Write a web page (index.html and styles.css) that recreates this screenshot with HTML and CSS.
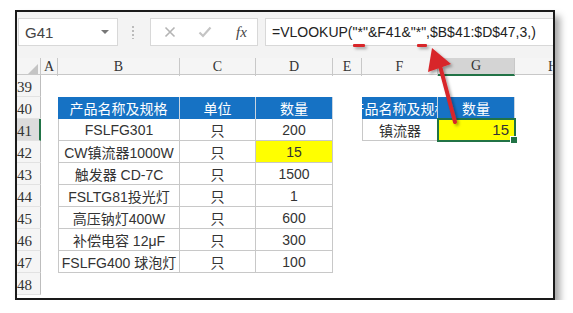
FILE: index.html
```html
<!DOCTYPE html>
<html lang="zh">

<head>
    <meta charset="UTF-8">
    <title>VLOOKUP 通配符查找</title>
    <link rel="stylesheet" href="styles.css">
</head>

<body>
    <div class="window">
        <div class="toolbar">
            <div class="namebox">
                <span>G41</span>
                <span class="caret"></span>
            </div>
            <div class="dots"></div>
            <div class="fnbox">
                <svg class="fn-x" width="12" height="12" viewBox="0 0 12 12">
                    <path d="M1.5 1.5 L10.5 10.5 M10.5 1.5 L1.5 10.5" stroke="#b4b4b4" stroke-width="1.6" fill="none"/>
                </svg>
                <svg class="fn-ok" width="14" height="12" viewBox="0 0 14 12">
                    <path d="M1.5 6.5 L5 10 L12.5 1.5" stroke="#c4c4c4" stroke-width="2.2" fill="none"/>
                </svg>
                <span class="fn-fx">fx</span>
            </div>
            <div class="formula">=VLOOKUP("*"&amp;F41&amp;"*",$B$41:$D$47,3,)</div>
        </div>

        <div class="sheet">
            <div class="row head">
                <div class="corner"></div>
                <div class="colh">A</div>
                <div class="colh">B</div>
                <div class="colh">C</div>
                <div class="colh">D</div>
                <div class="colh">E</div>
                <div class="colh">F</div>
                <div class="colh active">G</div>
                <div class="colh">H</div>
            </div>

            <div class="row">
                <div class="rowh">39</div>
                <div></div><div></div><div></div><div></div><div></div><div></div><div></div><div></div>
            </div>

            <div class="row">
                <div class="rowh">40</div>
                <div></div>
                <div class="th">产品名称及规格</div>
                <div class="th">单位</div>
                <div class="th">数量</div>
                <div></div>
                <div class="th clip">产品名称及规格</div>
                <div class="th">数量</div>
                <div></div>
            </div>

            <div class="row">
                <div class="rowh active">41</div>
                <div></div>
                <div class="td first">FSLFG301</div>
                <div class="td">只</div>
                <div class="td">200</div>
                <div></div>
                <div class="td first">镇流器</div>
                <div class="td hl right sel">15</div>
                <div></div>
            </div>

            <div class="row">
                <div class="rowh">42</div>
                <div></div>
                <div class="td first">CW镇流器1000W</div>
                <div class="td">只</div>
                <div class="td hl">15</div>
                <div></div><div></div><div></div><div></div>
            </div>

            <div class="row">
                <div class="rowh">43</div>
                <div></div>
                <div class="td first">触发器 CD-7C</div>
                <div class="td">只</div>
                <div class="td">1500</div>
                <div></div><div></div><div></div><div></div>
            </div>

            <div class="row">
                <div class="rowh">44</div>
                <div></div>
                <div class="td first">FSLTG81投光灯</div>
                <div class="td">只</div>
                <div class="td">1</div>
                <div></div><div></div><div></div><div></div>
            </div>

            <div class="row">
                <div class="rowh">45</div>
                <div></div>
                <div class="td first">高压钠灯400W</div>
                <div class="td">只</div>
                <div class="td">600</div>
                <div></div><div></div><div></div><div></div>
            </div>

            <div class="row">
                <div class="rowh">46</div>
                <div></div>
                <div class="td first">补偿电容 12μF</div>
                <div class="td">只</div>
                <div class="td">300</div>
                <div></div><div></div><div></div><div></div>
            </div>

            <div class="row">
                <div class="rowh">47</div>
                <div></div>
                <div class="td first">FSLFG400 球泡灯</div>
                <div class="td">只</div>
                <div class="td">100</div>
                <div></div><div></div><div></div><div></div>
            </div>

            <div class="row">
                <div class="rowh">48</div>
                <div></div><div></div><div></div><div></div><div></div><div></div><div></div><div></div>
            </div>
        </div>
    </div>

    <!-- red annotation drawn over the screenshot -->
    <svg class="marks" width="573" height="313" viewBox="0 0 573 313">
        <defs>
            <filter id="shade" x="-50%" y="-50%" width="200%" height="200%">
                <feDropShadow dx="2" dy="2" stdDeviation="1.5" flood-color="#000" flood-opacity="0.35"/>
            </filter>
        </defs>
        <g filter="url(#shade)" fill="#d8262a">
            <rect x="353" y="44" width="12" height="3" rx="1"/>
            <rect x="417" y="44" width="10" height="3" rx="1"/>
            <line x1="455" y1="122" x2="440" y2="66" stroke="#d8262a" stroke-width="4" stroke-linecap="round"/>
            <polygon points="432,48 428,72 451,64"/>
        </g>
    </svg>
</body>

</html>
```

FILE: styles.css
```css
* {
    box-sizing: border-box;
}

body {
    margin: 0;
    background-color: #fff;
    font-family: 'Liberation Sans', 'Noto Sans CJK SC', sans-serif;
    color: #333;
}

.window {
    margin: 10px 0 0 15px;
    width: 540px;
    height: 290px;
    border: 2px solid #1a1a1a;
    box-shadow: 5px 6px 7px rgba(0, 0, 0, 0.35);
    overflow: hidden;
    background-color: #fff;
}

/* formula bar */
.toolbar {
    display: flex;
    align-items: center;
    height: 46px;
    padding: 6px 0 12px 1px;
    background-color: #f3f3f3;
}

.namebox {
    display: flex;
    align-items: center;
    justify-content: space-between;
    width: 100px;
    height: 28px;
    padding: 0 6px 0 6px;
    background-color: #fff;
    border: 1px solid #d8d8d8;
    font-size: 15px;
    color: #444;
}

.caret {
    width: 0;
    height: 0;
    border-left: 4px solid transparent;
    border-right: 4px solid transparent;
    border-top: 4px solid #777;
    margin-right: 2px;
}

.dots {
    width: 2px;
    height: 14px;
    margin: 0 16px 0 14px;
    background-image: radial-gradient(circle, #bbb 1px, transparent 1.2px);
    background-size: 2px 4px;
}

.fnbox {
    display: flex;
    align-items: center;
    width: 108px;
    height: 28px;
    padding: 0 10px 0 13px;
    background-color: #fff;
    border: 1px solid #d8d8d8;
}

.fn-x {
    margin-right: 22px;
}

.fn-ok {
    margin-right: 24px;
}

.fn-fx {
    font-family: 'Liberation Serif', serif;
    font-style: italic;
    font-size: 15px;
    color: #444;
}

.formula {
    flex: 1;
    height: 28px;
    margin-left: 7px;
    padding: 5px 0 0 6px;
    background-color: #fff;
    border: 1px solid #d8d8d8;
    border-right: none;
    font-size: 14px;
    color: #222;
    white-space: nowrap;
}

/* grid */
.row {
    display: grid;
    grid-template-columns: 24px 17px 122px 76px 77px 29px 76px 77px 77px;
    height: 22px;
}

.row > div {
    display: flex;
    align-items: center;
    justify-content: center;
    white-space: nowrap;
    font-size: 14px;
}

.row.head {
    height: 17px;
    background-color: #f5f5f5;
    border-bottom: 1px solid #c8c8c8;
}

.corner {
    position: relative;
    border-right: 1px solid #c8c8c8;
}

.corner::after {
    content: "";
    position: absolute;
    right: 2px;
    bottom: 2px;
    border-left: 10px solid transparent;
    border-bottom: 10px solid #c4c4c4;
}

.row > .colh {
    border-right: 1px solid #c8c8c8;
    font-family: 'Liberation Serif', serif;
    font-size: 14px;
    color: #333;
}

.row > .colh.active {
    background-color: #d4d4d4;
    border-bottom: 2px solid #217346;
}

.row > .rowh {
    justify-content: flex-start;
    padding: 4px 0 0 0;
    background-color: #f5f5f5;
    border-right: 1px solid #bdbdbd;
    border-bottom: 1px solid #e2e2e2;
    font-family: 'Liberation Serif', serif;
    font-size: 15px;
    color: #333;
}

.row > .rowh.active {
    background-color: #dcdcdc;
    border-right: 2px solid #217346;
}

/* data tables */
.row > .th {
    background-color: #1672c4;
    color: #fff;
    border-right: 1px solid #c8d4e0;
    overflow: hidden;
}

.row > .td {
    border-right: 1px solid #c8c8c8;
    border-bottom: 1px solid #c8c8c8;
    color: #333;
}

.row > .td.first {
    border-left: 1px solid #c8c8c8;
}

.row > .hl {
    background-color: #ffff00;
}

.row > .right {
    justify-content: flex-end;
    padding-right: 5px;
    font-size: 15px;
}

.sel {
    position: relative;
    outline: 2px solid #217346;
    outline-offset: -1px;
}

.sel::after {
    content: "";
    position: absolute;
    right: -4px;
    bottom: -4px;
    width: 6px;
    height: 6px;
    background-color: #217346;
    border: 1px solid #fff;
}

.marks {
    position: absolute;
    top: 0;
    left: 0;
    pointer-events: none;
}
```
